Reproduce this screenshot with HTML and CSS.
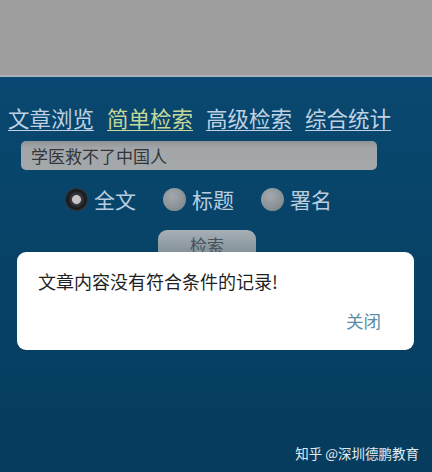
FILE: index.html
```html
<!DOCTYPE html>
<html lang="zh">
<head>
  <meta charset="UTF-8" />
  <meta name="viewport" content="width=device-width, initial-scale=1" />
  <title>简单检索</title>
  <link rel="stylesheet" href="styles.css">
</head>
<body>

<div class="topbar"></div>

<main class="page">
  <nav class="nav">
    <a href="#">文章浏览</a>
    <a href="#" class="active">简单检索</a>
    <a href="#">高级检索</a>
    <a href="#">综合统计</a>
  </nav>

  <div class="search-box">学医救不了中国人</div>

  <div class="options">
    <label class="option"><span class="radio checked"></span>全文</label>
    <label class="option"><span class="radio"></span>标题</label>
    <label class="option"><span class="radio"></span>署名</label>
  </div>

  <div class="actions">
    <button class="btn">检索</button>
  </div>
</main>

<!-- 提示框 -->
<div class="dialog">
  <p class="dialog-msg">文章内容没有符合条件的记录!</p>
  <div class="dialog-foot">
    <a href="#" class="dialog-close">关闭</a>
  </div>
</div>

<div class="mark">知乎 @深圳德鹏教育</div>

</body>
</html>
```

FILE: styles.css
```css
* {
  box-sizing: border-box;
  margin: 0;
  padding: 0;
}

html, body {
  height: 472px;
  overflow: hidden;
}

body {
  font-family: "Noto Sans CJK SC", "Noto Sans", sans-serif;
  background: linear-gradient(180deg, #0a4a75 0%, #084469 45%, #063c5d 100%);
  position: relative;
}

.topbar {
  height: 77px;
  background: #9e9e9e;
  border-bottom: 2px solid #a9b2ba;
}

.page {
  padding: 0 8px;
}

.nav {
  display: flex;
  gap: 13px;
  margin-top: 26px;
}

.nav a {
  font-size: 21.5px;
  line-height: 30px;
  color: #bfd1e2;
  text-decoration: underline;
  text-underline-offset: 3px;
  text-decoration-thickness: 1px;
}

.nav a.active {
  color: #c6d79a;
}

.search-box {
  margin: 8px 0 0 13px;
  width: 356px;
  height: 29px;
  padding: 0 10px;
  background: linear-gradient(180deg, #8f9397 0%, #a3a6a9 25%, #a5a8aa 100%);
  border-radius: 5px;
  font-size: 17px;
  line-height: 29px;
  color: #30363b;
}

.options {
  display: flex;
  gap: 27px;
  margin: 15px 0 0 57px;
}

.option {
  display: flex;
  align-items: center;
  gap: 6px;
  font-size: 21px;
  line-height: 28px;
  color: #b9cddf;
}

.radio {
  width: 23px;
  height: 23px;
  border-radius: 50%;
  background: radial-gradient(circle at 40% 35%, #a3a8ac 0%, #8a9297 60%, #6f787e 100%);
}

.radio.checked {
  background: radial-gradient(circle, #c9c4c6 0 4px, #3b3d40 5px, #17191c 9px, #2a2c30 11px, #4a4e52 12px);
}

.actions {
  display: flex;
  margin: 17px 0 0 150px;
}

.btn {
  width: 98px;
  height: 30px;
  border: none;
  border-radius: 9px;
  background: linear-gradient(180deg, #a7b0b6 0%, #8b979f 60%, #808d95 100%);
  font-family: inherit;
  font-size: 17px;
  line-height: 22px;
  color: #46525c;
}

.dialog {
  position: absolute;
  top: 252px;
  left: 17px;
  width: 397px;
  height: 98px;
  background: #fff;
  border-radius: 9px;
  padding: 14px 21px 0 21px;
}

.dialog-msg {
  font-size: 18px;
  line-height: 30px;
  color: #1f1f1f;
}

.dialog-foot {
  display: flex;
  justify-content: flex-end;
  margin-top: 13px;
  padding-right: 12px;
}

.dialog-close {
  font-size: 17.5px;
  line-height: 24px;
  color: #5b8da8;
  text-decoration: none;
}

.mark {
  position: absolute;
  right: 13px;
  bottom: 9px;
  font-size: 13.5px;
  line-height: 20px;
  color: #e4ebf0;
}
```
